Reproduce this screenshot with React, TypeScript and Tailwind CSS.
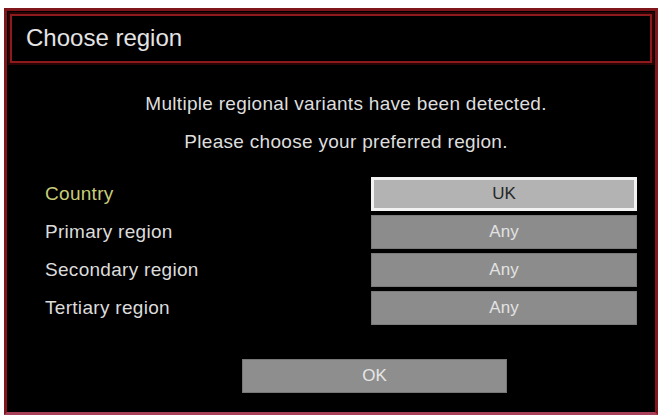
import React from "react";

// Region picker dialog as shown on the set-top box during first install.
const ROWS = [
  { label: "Country", value: "UK", focused: true },
  { label: "Primary region", value: "Any" },
  { label: "Secondary region", value: "Any" },
  { label: "Tertiary region", value: "Any" },
];

export default function App() {
  return (
    <div className="h-[415px] w-[662px] overflow-hidden bg-white" style={{ fontFamily: '"Liberation Sans", Arial, sans-serif' }}>
      <div className="ml-[4px] mt-[8px] flex h-[407px] w-[654px] flex-col border-[3px] border-[#7e161c] border-b-[#a8405a] bg-black">
        {/* Title bar */}
        <div className="mx-[1px] mt-[1px] bg-[#2a0305] p-[2px]">
          <div className="flex h-[49px] items-center border-2 border-[#8e1a1e] bg-black pl-[14px] pb-[2px] text-[24px] text-[#e4e4e4]">
            Choose region
          </div>
        </div>

        {/* Message */}
        <div className="pl-[30px] pt-[20px] text-center text-[19px] leading-[38px] tracking-[0.3px] text-[#dedede]">
          <p>Multiple regional variants have been detected.</p>
          <p>Please choose your preferred region.</p>
        </div>

        {/* Region selectors */}
        <div className="mt-[16px] flex flex-col gap-[4px] pl-[38px] pr-[18px]">
          {ROWS.map((row) => (
            <div key={row.label} className="grid h-[34px] grid-cols-[1fr_266px] items-center">
              <span className={row.focused ? "text-[19px] tracking-[0.3px] text-[#c8cd78]" : "text-[19px] tracking-[0.3px] text-[#dcdcdc]"}>
                {row.label}
              </span>
              {row.focused ? (
                <div className="flex h-[34px] items-center justify-center border-[3px] border-[#f2f2f2] bg-[#b3b3b3] text-[17px] text-[#262626]">
                  {row.value}
                </div>
              ) : (
                <div className="flex h-[34px] items-center justify-center border border-[#7a7a7a] bg-[#8c8c8c] text-[17px] text-[#e2e2e2]">
                  {row.value}
                </div>
              )}
            </div>
          ))}
        </div>

        {/* Confirm */}
        <div className="mt-[34px] pl-[235px]">
          <button className="flex h-[34px] w-[265px] items-center justify-center border border-[#777] bg-[#8e8e8e] text-[17px] text-[#e6e6e6]">
            OK
          </button>
        </div>
      </div>
    </div>
  );
}
